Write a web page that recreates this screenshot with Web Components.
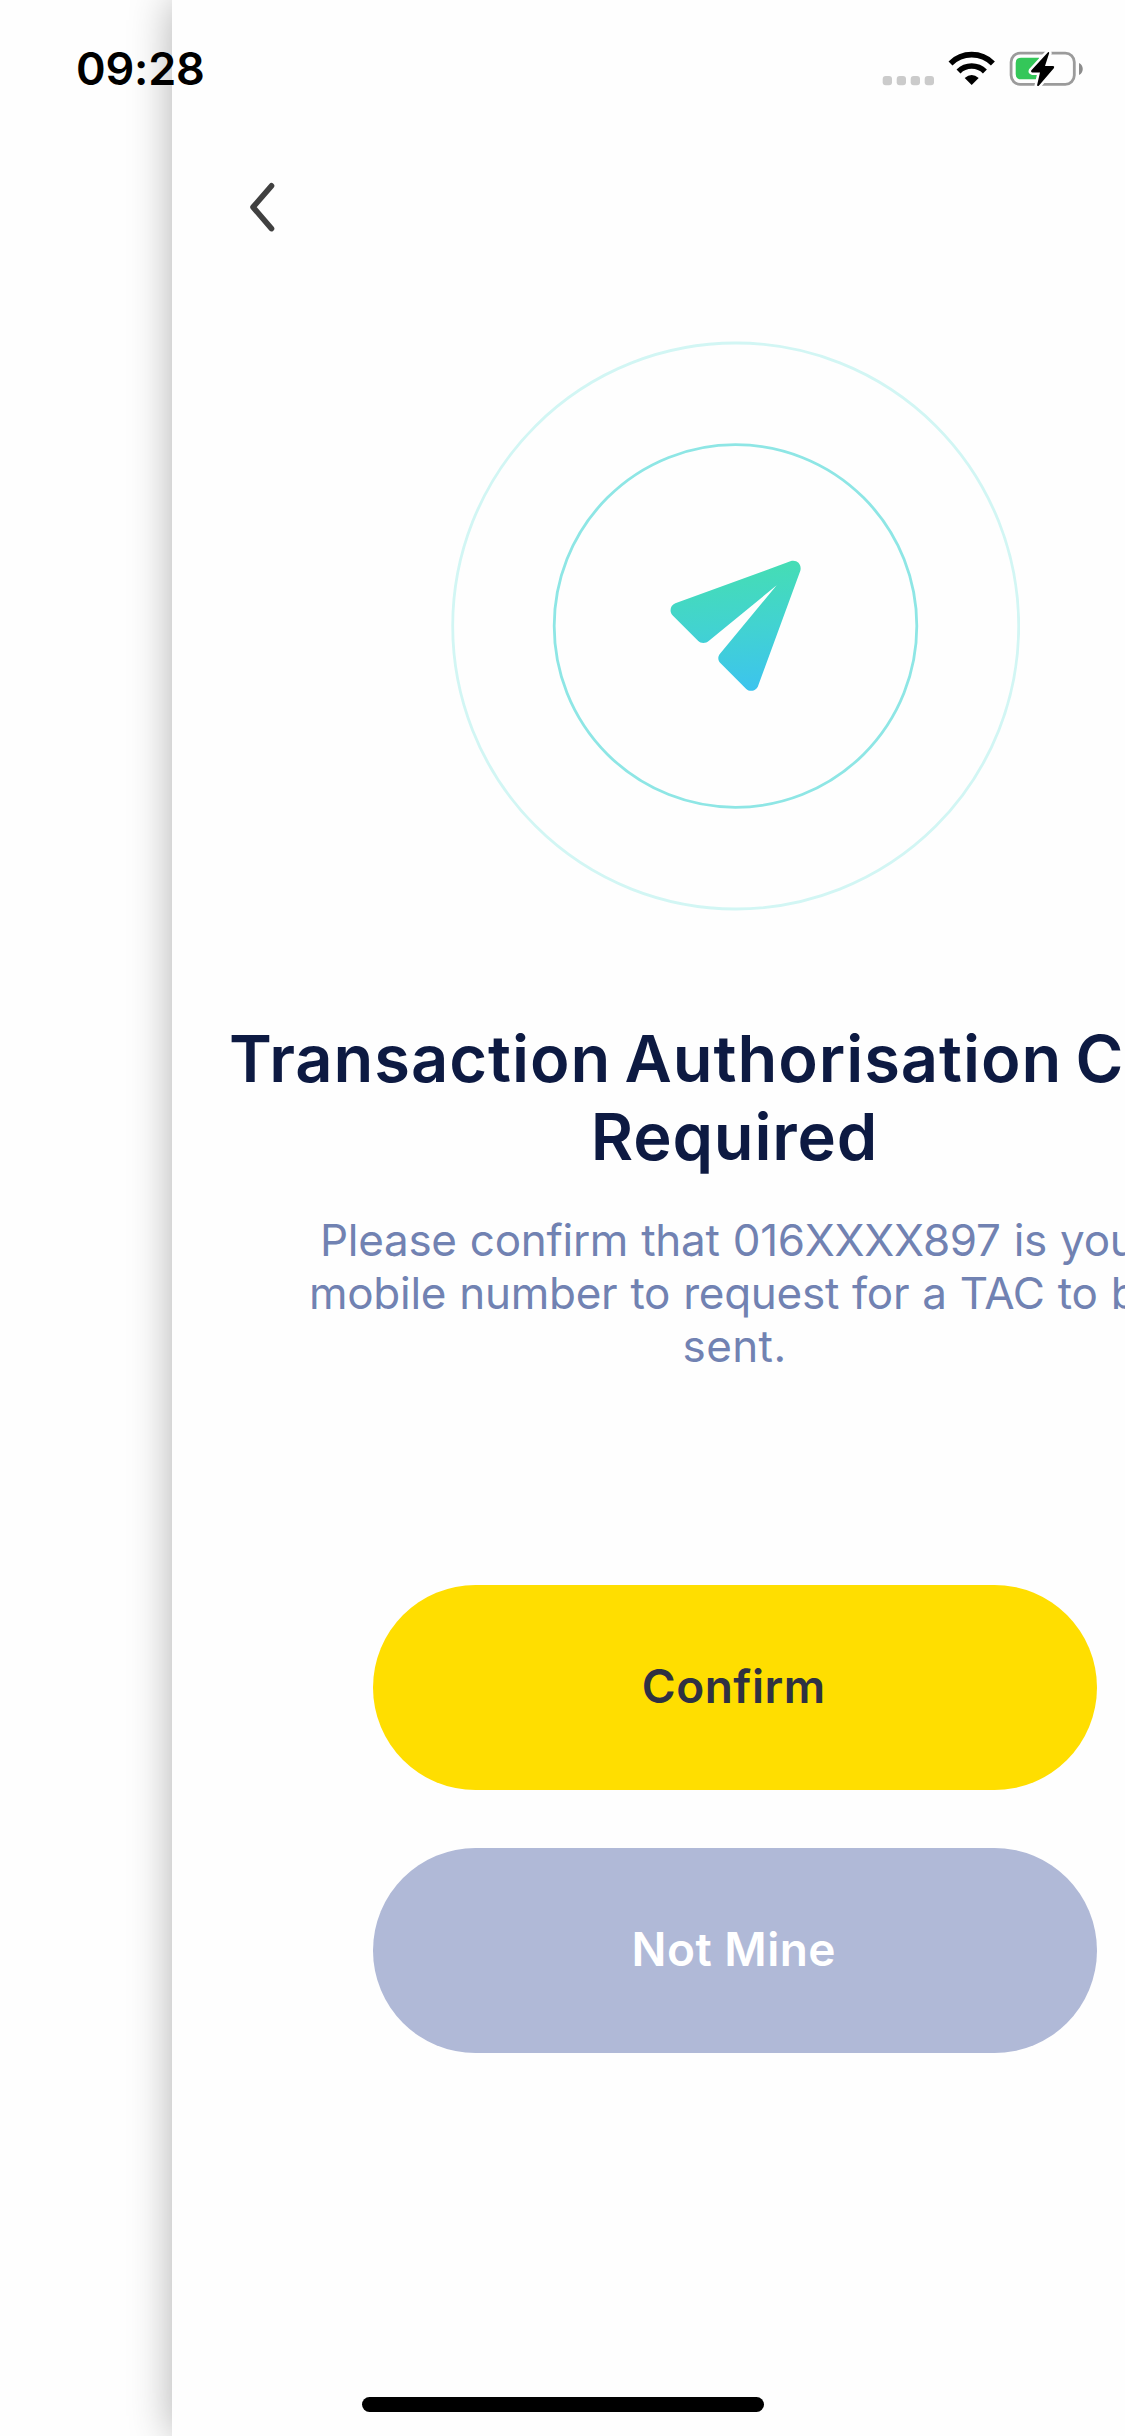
<!DOCTYPE html>
<html lang="en">
<head>
<meta charset="utf-8">
<title>Transaction Authorisation Code</title>
<style>
  html, body { margin: 0; background: #fefefe; }
  body { width: 1125px; height: 2436px; overflow: hidden; font-family: Inter, Roboto, sans-serif; }
</style>
</head>
<body>
<app-screen>
  <status-bar slot="status" time="09:28"></status-bar>
  <sheet-panel>
    <back-button></back-button>
    <plane-badge></plane-badge>
    <text-lines style="--size:65px;--weight:600;--color:#0d1a42;--leading:78px;margin-top:109px">
      <text-line start="57" spacing="0.95" words="-4">Transaction Authorisation Code</text-line>
      <text-line spacing="0.85">Required</text-line>
    </text-lines>
    <text-lines style="--size:44px;--weight:400;--color:#7182b2;--leading:53px;margin-top:37.5px">
      <text-line start="148" spacing="-0.28" words="1">Please confirm that 016XXXX897 is your</text-line>
      <text-line start="137" spacing="-0.28" words="1">mobile number to request for a TAC to be</text-line>
      <text-line spacing="0.4">sent.</text-line>
    </text-lines>
    <button-stack>
      <pill-button style="--fill:#ffde00;--ink:#2f3142">Confirm</pill-button>
      <pill-button style="--fill:#b0b9d7;--ink:#ffffff">Not Mine</pill-button>
    </button-stack>
  </sheet-panel>
  <home-indicator slot="home"></home-indicator>
</app-screen>
<script>
const define = (name, markup, setup) => customElements.define(name, class extends HTMLElement {
  constructor() {
    super();
    const template = document.createElement('template');
    template.innerHTML = markup;
    this.attachShadow({ mode: 'open' }).append(template.content.cloneNode(true));
  }
  connectedCallback() { if (setup) setup(this, this.shadowRoot); }
});

define('app-screen', `
  <style>
    :host { display: block; position: relative; width: 1125px; height: 2436px; overflow: hidden; box-sizing: border-box; padding-left: 172px; }
    .over { position: absolute; left: 0; right: 0; }
    .top { top: 0; }
    .bottom { bottom: 24px; }
  </style>
  <slot></slot>
  <div class="over top"><slot name="status"></slot></div>
  <div class="over bottom"><slot name="home"></slot></div>`);

define('sheet-panel', `
  <style>
    :host { display: flex; flex-direction: column; width: 1125px; height: 2436px; background: #fefefe; box-shadow: 0 0 40px rgba(0,0,0,.31); }
  </style><slot></slot>`);

define('status-bar', `
  <style>
    :host { display: flex; justify-content: space-between; align-items: flex-start; padding: 42px 41px 0 76px; }
    .time { font: 600 45px/54px Inter, sans-serif; letter-spacing: -.2px; color: #000; }
    svg { display: block; margin-top: 8px; }
  </style>
  <span class="time"></span>
  <svg width="204" height="38" viewBox="880 50 204 38">
    <g fill="#cbcbcb">
      <rect x="882.7" y="76" width="9.3" height="9.3" rx="3"/><rect x="896.7" y="76" width="9.3" height="9.3" rx="3"/>
      <rect x="910.7" y="76" width="9.3" height="9.3" rx="3"/><rect x="924.7" y="76" width="9.3" height="9.3" rx="3"/>
    </g>
    <g transform="translate(971.7 84.6)">
      <path d="M-21.2-21.2A30 30 0 0 1 21.2-21.2" fill="none" stroke="#000" stroke-width="5.6"/>
      <path d="M-13.2-13.2A18.7 18.7 0 0 1 13.2-13.2" fill="none" stroke="#000" stroke-width="5.6"/>
      <path d="M0 .5L-7-6.5Q0-12.5 7-6.5Z"/>
    </g>
    <rect x="1011.1" y="53.1" width="63.2" height="31.2" rx="9" fill="none" stroke="#9b9b9b" stroke-width="2.8"/>
    <path d="M1079 63C1084 65 1084 73 1079 75Z" fill="#8c8c8c"/>
    <path d="M1021 57.7H1039V79.3H1021Q1015.7 79.3 1015.7 74V63Q1015.7 57.7 1021 57.7Z" fill="#34c759"/>
    <path d="M1048 52.3L1031.2 70.6Q1030.6 72.2 1032 72.4H1040L1037 85.6Q1038 86.6 1039 85.4L1054 68Q1054.8 66.2 1053 66H1045L1049.2 53Q1049 51.6 1048 52.3Z" fill="#fefefe" stroke="#fefefe" stroke-width="5"/>
    <path d="M1048 52.3L1031.2 70.6Q1030.6 72.2 1032 72.4H1040L1037 85.6Q1038 86.6 1039 85.4L1054 68Q1054.8 66.2 1053 66H1045L1049.2 53Q1049 51.6 1048 52.3Z"/>
  </svg>`, (el, root) => { root.querySelector('.time').textContent = el.getAttribute('time'); });

define('back-button', `
  <style>
    :host { display: block; height: 341px; box-sizing: border-box; padding: 180px 0 0 76px; }
    svg { display: block; }
  </style>
  <svg width="30" height="54" viewBox="248 180 30 54"><path d="M271.5 185.8L253 207.1L271.5 228.600" fill="none" stroke="#404040" stroke-width="5.6" stroke-linecap="round" stroke-linejoin="round"/></svg>`);

define('plane-badge', `
  <style>:host { display: flex; justify-content: center; height: 570px; } svg { display: block; }</style>
  <svg width="570" height="570" viewBox="450 341 570 570">
    <defs><linearGradient id="g" gradientUnits="userSpaceOnUse" x1="230" y1="62" x2="262" y2="455">
      <stop offset="0" stop-color="#45deb2"/><stop offset=".5" stop-color="#42d3d0"/><stop offset="1" stop-color="#3cc4ee"/>
    </linearGradient></defs>
    <circle cx="735.7" cy="626" r="283" fill="none" stroke="#d2f6f4" stroke-width="2.8"/>
    <circle cx="735.5" cy="626" r="181.3" fill="none" stroke="#8ee6e5" stroke-width="2.8"/>
    <path transform="translate(650 540) scale(.33333)" fill="url(#g)" d="M421 64C440 58 456 72 451 92L325 436C321 453 300 458 288 446L211 369C203 361 203 349 210 341L380 136L177 302C167 311 153 311 144 302L69 227C57 216 60 196 76 190Z"/>
  </svg>`);

define('text-lines', `
  <style>
    :host { display: flex; flex-direction: column; font-size: var(--size); font-weight: var(--weight); line-height: var(--leading); color: var(--color); }
  </style><slot></slot>`);

define('text-line', `
  <style>:host { display: block; white-space: nowrap; text-align: center; }</style><slot></slot>`,
  el => {
    el.style.letterSpacing = el.getAttribute('spacing') + 'px';
    if (el.hasAttribute('words')) el.style.wordSpacing = el.getAttribute('words') + 'px';
    if (el.hasAttribute('start')) {
      el.style.textAlign = 'left';
      el.style.paddingLeft = el.getAttribute('start') + 'px';
    }
  });

define('button-stack', `
  <style>:host { display: flex; flex-direction: column; align-items: center; gap: 58px; margin-top: 212px; padding-left: .5px; }</style><slot></slot>`);

define('pill-button', `
  <style>
    :host { display: block; }
    button { display: flex; align-items: center; justify-content: center; width: 724px; height: 205.3px; border: 0; border-radius: 102.6px; padding: 0 2px 2px 0; background: var(--fill); color: var(--ink); font: 600 46px/56px Inter, sans-serif; letter-spacing: .5px; }
  </style>
  <button><slot></slot></button>`);

define('home-indicator', `
  <style>
    :host { display: flex; justify-content: center; padding-left: 1px; }
    i { display: block; width: 402px; height: 15px; border-radius: 7.5px; background: #000; }
  </style><i></i>`);
</script>
</body>
</html>
